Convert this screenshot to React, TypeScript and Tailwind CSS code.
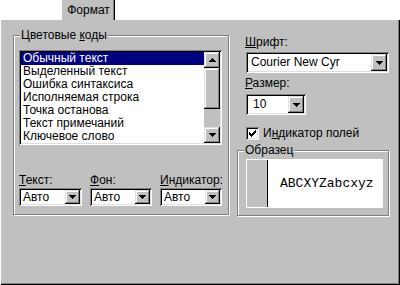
import React from 'react';

const colorItems = [
  'Обычный текст',
  'Выделенный текст',
  'Ошибка синтаксиса',
  'Исполняемая строка',
  'Точка останова',
  'Текст примечаний',
  'Ключевое слово',
];

// win95-style bevels
const sunken =
  'shadow-[inset_1px_1px_0_#808080,inset_-1px_-1px_0_#fff,inset_2px_2px_0_#000,inset_-2px_-2px_0_#dfdfdf]';
const raised =
  'bg-[#c0c0c0] shadow-[inset_-1px_-1px_0_#000,inset_1px_1px_0_#dfdfdf,inset_-2px_-2px_0_#808080,inset_2px_2px_0_#fff]';
const etched = 'border border-[#808080] shadow-[inset_1px_1px_0_#fff,1px_1px_0_#fff]';

function ArrowDown() {
  return (
    <svg width="7" height="4" viewBox="0 0 7 4" shapeRendering="crispEdges">
      <path d="M0 0h7v1h-1v1h-1v1h-1v1h-1v-1h-1v-1h-1v-1h-1z" fill="#000" />
    </svg>
  );
}

function ArrowUp() {
  return (
    <svg width="7" height="4" viewBox="0 0 7 4" shapeRendering="crispEdges">
      <path d="M3 0h1v1h1v1h1v1h1v1h-7v-1h1v-1h1v-1h1z" fill="#000" />
    </svg>
  );
}

function Check() {
  return (
    <svg width="7" height="7" viewBox="0 0 7 7" shapeRendering="crispEdges">
      <path
        d="M6 0h1v1h-1z M5 1h2v1h-2z M0 2h1v1h-1z M4 2h3v1h-3z M0 3h2v1h-2z M3 3h3v1h-3z M0 4h5v1h-5z M1 5h3v1h-3z M2 6h1v1h-1z"
        fill="#000"
      />
    </svg>
  );
}

function Combo({ value, className, textClass, btnClass }: { value: string; className: string; textClass: string; btnClass: string }) {
  return (
    <div className={`flex bg-white p-[2px] ${sunken} ${className}`}>
      <span className={`flex-1 flex items-center whitespace-nowrap overflow-hidden ${textClass}`}>{value}</span>
      <span className={`flex items-center justify-center ${raised} ${btnClass}`}>
        <ArrowDown />
      </span>
    </div>
  );
}

function Label({ first, rest }: { first: string; rest: string }) {
  return (
    <span className="whitespace-nowrap">
      <span className="underline underline-offset-[1px]">{first}</span>
      {rest}
    </span>
  );
}

export default function App() {
  return (
    <div className="w-[400px] h-[285px] bg-white flex flex-col overflow-hidden font-['Liberation_Sans',Arial,sans-serif] text-[12px] leading-[13px] text-black">
      {/* Tab strip */}
      <div className="h-[19px] shrink-0 relative z-10 flex">
        <div className="ml-[61px] w-[54px] h-[20px] bg-[#c0c0c0] border-l border-white shadow-[inset_-1px_0_0_#000,inset_-2px_0_0_#808080] flex items-center justify-center">
          Формат
        </div>
      </div>

      {/* Tab page */}
      <div className="flex-1 bg-[#c0c0c0] shadow-[inset_1px_1px_0_#fff,inset_-1px_-1px_0_#000,inset_-2px_-2px_0_#808080] flex items-start pl-[13px] pt-[16px]">
        {/* Цветовые коды */}
        <div className={`relative w-[216px] h-[180px] pl-[5px] pt-[14px] ${etched}`}>
          <span className="absolute left-[6px] top-[-7px] px-[1px] bg-[#c0c0c0] whitespace-nowrap">
            Цветовые <span className="underline underline-offset-[1px]">к</span>оды
          </span>

          <div className={`w-[203px] h-[95px] bg-white p-[2px] flex ${sunken}`}>
            <div className="flex-1 flex flex-col">
              {colorItems.map((item, i) => (
                <div
                  key={item}
                  className={i === 0 ? 'h-[13px] pl-[2px] bg-[#000080] text-white whitespace-nowrap' : 'h-[13px] pl-[2px] whitespace-nowrap'}
                >
                  {item}
                </div>
              ))}
            </div>
            <div className="w-[16px] flex flex-col bg-[#c0c0c0]">
              <div className={`h-[16px] flex items-center justify-center ${raised}`}>
                <ArrowUp />
              </div>
              <div className={`h-[41px] ${raised}`}></div>
              <div className="flex-1"></div>
              <div className={`h-[16px] flex items-center justify-center ${raised}`}>
                <ArrowDown />
              </div>
            </div>
          </div>

          <div className="mt-[29px] flex gap-[8px]">
            <div className="w-[63px] flex flex-col">
              <Label first="Т" rest="екст:" />
              <Combo value="Авто" className="mt-[1px] h-[18px]" textClass="pl-[2px]" btnClass="w-[15px]" />
            </div>
            <div className="w-[62px] flex flex-col">
              <Label first="Ф" rest="он:" />
              <Combo value="Авто" className="mt-[1px] h-[18px]" textClass="pl-[2px]" btnClass="w-[15px]" />
            </div>
            <div className="w-[62px] flex flex-col">
              <Label first="И" rest="ндикатор:" />
              <Combo value="Авто" className="mt-[1px] h-[18px]" textClass="pl-[2px]" btnClass="w-[15px]" />
            </div>
          </div>
        </div>

        {/* Right column */}
        <div className="ml-[8px] w-[152px] flex flex-col">
          <div className="mt-[1px] pl-[8px]">
            <Label first="Ш" rest="рифт:" />
          </div>
          <Combo value="Courier New Cyr" className="mt-[3px] ml-[9px] w-[143px] h-[21px]" textClass="pl-[3px]" btnClass="w-[16px]" />

          <div className="mt-[4px] pl-[8px]">
            <Label first="Р" rest="азмер:" />
          </div>
          <Combo value="10" className="mt-[4px] ml-[9px] w-[60px] h-[21px]" textClass="pl-[5px]" btnClass="w-[16px]" />

          <div className="mt-[12px] pl-[9px] flex items-center h-[13px]">
            <div className={`w-[13px] h-[13px] bg-white flex items-center justify-center ${sunken}`}>
              <Check />
            </div>
            <span className="ml-[4px] whitespace-nowrap">
              И<span className="underline underline-offset-[1px]">н</span>дикатор полей
            </span>
          </div>

          {/* Образец */}
          <div className={`relative mt-[10px] w-[152px] h-[66px] pl-[8px] pt-[8px] ${etched}`}>
            <span className="absolute left-[6px] top-[-7px] px-[1px] bg-[#c0c0c0]">Образец</span>
            <div className="w-[137px] h-[49px] bg-white flex py-[1px] pl-[1px]">
              <div className="w-[20px] bg-[#c0c0c0]"></div>
              <div className="w-[1px] bg-black"></div>
              <div className="flex-1 flex items-center pl-[12px] font-['Liberation_Mono','Courier_New',monospace] text-[13px] whitespace-nowrap">
                ABCXYZabcxyz
              </div>
            </div>
          </div>
        </div>
      </div>
    </div>
  );
}
